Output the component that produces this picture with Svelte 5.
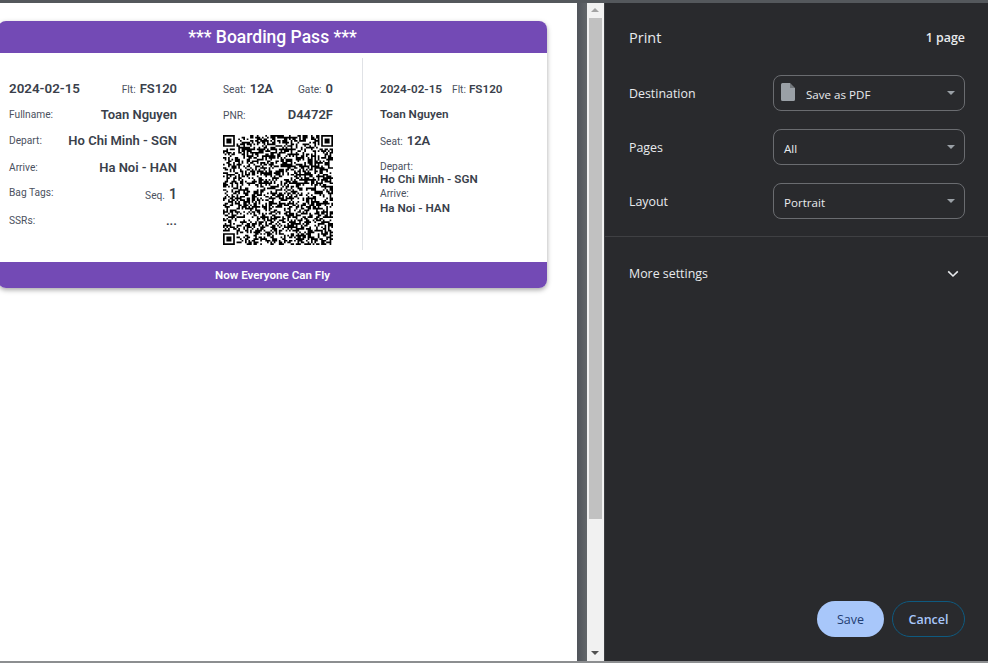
<script>
	// QR modules: three finders, rest is seeded noise
	const size = 65;

	function inFinder(x, y, ox, oy) {
		return x >= ox && x < ox + 7 && y >= oy && y < oy + 7;
	}

	function finderOn(x, y, ox, oy) {
		const dx = x - ox;
		const dy = y - oy;
		if (dx === 0 || dx === 6 || dy === 0 || dy === 6) return true;
		return dx >= 2 && dx <= 4 && dy >= 2 && dy <= 4;
	}

	function buildQr() {
		let seed = 20240215;
		const rand = () => {
			seed = (seed * 1664525 + 1013904223) % 4294967296;
			return seed / 4294967296;
		};
		const finders = [[0, 0], [size - 7, 0], [0, size - 7]];
		let d = '';
		for (let y = 0; y < size; y++) {
			for (let x = 0; x < size; x++) {
				const noise = rand() > 0.5;
				const f = finders.find(([ox, oy]) => inFinder(x, y, ox, oy));
				let on = noise;
				if (f) on = finderOn(x, y, f[0], f[1]);
				else if (finders.some(([ox, oy]) => x >= ox - 1 && x <= ox + 7 && y >= oy - 1 && y <= oy + 7)) on = false;
				if (on) d += `M${x} ${y}h1v1h-1z`;
			}
		}
		return d;
	}

	const qrPath = buildQr();

	const settings = [
		{ label: 'Destination', value: 'Save as PDF', icon: true },
		{ label: 'Pages', value: 'All' },
		{ label: 'Layout', value: 'Portrait' }
	];
</script>

<div class="screen">
	<div class="preview">
		<div class="card">
			<div class="card-head">*** Boarding Pass ***</div>
			<div class="card-body">
				<div class="col-main">
					<div class="row">
						<b class="main-date">2024-02-15</b>
						<span><small>Flt:</small> <b>FS120</b></span>
					</div>
					<div class="row"><small class="lift">Fullname:</small><b>Toan Nguyen</b></div>
					<div class="row"><small class="lift">Depart:</small><b>Ho Chi Minh - SGN</b></div>
					<div class="row"><small class="lift">Arrive:</small><b>Ha Noi - HAN</b></div>
					<div class="row"><small class="lift more-lift">Bag Tags:</small><span><small>Seq.</small> <b class="seq">1</b></span></div>
					<div class="row"><small class="lift">SSRs:</small><b>...</b></div>
				</div>
				<div class="col-qr">
					<div class="row">
						<span><small>Seat:</small> <b>12A</b></span>
						<span><small>Gate:</small> <b>0</b></span>
					</div>
					<div class="row"><small>PNR:</small><b>D4472F</b></div>
					<svg class="qr" viewBox="0 0 65 65" aria-hidden="true"><path d={qrPath} fill="#000" /></svg>
				</div>
				<div class="col-stub">
					<div class="stub-top">
						<b class="date">2024-02-15</b>
						<span class="stub-flt"><small>Flt:</small><b class="small-b">FS120</b></span>
					</div>
					<b class="stub-name">Toan Nguyen</b>
					<div class="stub-seat"><small>Seat:</small> <b>12A</b></div>
					<small class="stub-label first">Depart:</small>
					<b class="stub-val">Ho Chi Minh - SGN</b>
					<small class="stub-label second">Arrive:</small>
					<b class="stub-val last">Ha Noi - HAN</b>
				</div>
			</div>
			<div class="card-foot">Now Everyone Can Fly</div>
		</div>
	</div>

	<div class="edge"></div>

	<div class="scrollbar">
		<span class="arrow up"></span>
		<div class="thumb"></div>
		<span class="arrow down"></span>
	</div>

	<aside class="panel">
		<header class="panel-head">
			<h1>Print</h1>
			<span>1 page</span>
		</header>
		{#each settings as s}
			<div class="setting">
				<span class="setting-label">{s.label}</span>
				<div class="select" class:has-icon={s.icon}>
					{#if s.icon}
						<svg class="doc" viewBox="0 0 14 18" aria-hidden="true">
							<path d="M1.5 0H9l5 5v11.5a1.5 1.5 0 0 1-1.5 1.5h-11A1.5 1.5 0 0 1 0 16.5v-15A1.5 1.5 0 0 1 1.5 0z" fill="#9aa0a6" />
							<path d="M9 0l5 5H9z" fill="#292a2d" opacity="0.35" />
						</svg>
					{/if}
					<span>{s.value}</span>
					<i class="caret"></i>
				</div>
			</div>
		{/each}
		<div class="more">
			<span>More settings</span>
			<svg class="chev" viewBox="0 0 12 8" aria-hidden="true">
				<path d="M1.2 1.4 6 6l4.8-4.6" fill="none" stroke="#e8eaed" stroke-width="1.6" />
			</svg>
		</div>
		<footer class="actions">
			<button class="save">Save</button>
			<button class="cancel">Cancel</button>
		</footer>
	</aside>
</div>

<style>
	:global(body) {
		margin: 0;
		overflow: hidden;
	}

	.screen {
		display: flex;
		width: 988px;
		height: 663px;
		box-sizing: border-box;
		border-top: 3px solid #54585c;
		border-bottom: 2px solid #8c8e90;
		background: #fff;
		overflow: hidden;
	}

	.preview {
		width: 577px;
		flex-shrink: 0;
		padding-top: 18px;
		box-sizing: border-box;
		background: #fff;
		font-family: Roboto, sans-serif;
		color: #3a3f4b;
	}

	.card {
		width: 549px;
		margin-left: -2px;
		border-radius: 8px;
		background: #fff;
		box-shadow: 0 2px 5px rgba(0, 0, 0, 0.35);
		overflow: hidden;
	}

	.card-head {
		height: 32px;
		line-height: 32px;
		background: #734ab5;
		color: #fff;
		text-align: center;
		font-size: 17.5px;
		font-weight: 500;
	}

	.card-body {
		display: flex;
		height: 209px;
		padding: 5px 0 12px;
		box-sizing: border-box;
	}

	b {
		font-weight: 600;
		font-size: 13px;
	}

	small {
		font-size: 10.2px;
		font-weight: 400;
		color: #4b5160;
	}

	.main-date {
		font-size: 13.4px;
	}

	.seq {
		font-size: 14px;
	}

	.row {
		display: flex;
		justify-content: space-between;
		align-items: baseline;
		height: 26.6px;
		line-height: 26.6px;
	}

	.lift {
		align-self: flex-start;
		line-height: 26px;
	}

	.more-lift {
		line-height: 24px;
	}

	.col-main {
		width: 168px;
		margin-left: 11px;
		padding-top: 17px;
	}

	.col-qr {
		width: 110px;
		margin-left: 46px;
		padding-top: 17px;
	}

	.qr {
		display: block;
		width: 110px;
		height: 110px;
		margin-top: 7px;
	}

	.col-stub {
		display: flex;
		flex-direction: column;
		align-items: flex-start;
		margin-left: 29px;
		padding-left: 17px;
		border-left: 1px solid #e0e2e6;
	}

	.stub-top {
		display: flex;
		gap: 10px;
		align-items: baseline;
		height: 26px;
		line-height: 26px;
		margin-top: 18px;
	}

	.stub-flt {
		display: flex;
		gap: 3px;
		align-items: baseline;
	}

	.stub-top .date,
	.small-b {
		font-size: 11.7px;
	}

	.stub-name {
		font-size: 11.7px;
		line-height: 16px;
		margin-top: 4px;
	}

	.stub-seat {
		line-height: 18px;
		margin-top: 9px;
	}

	.stub-label {
		line-height: 13px;
	}

	.stub-label.first {
		margin-top: 9px;
	}

	.stub-label.second {
		margin-top: 1px;
	}

	.stub-val {
		font-size: 11.7px;
		line-height: 13px;
	}

	.stub-val.last {
		margin-top: 2px;
	}

	.card-foot {
		height: 26px;
		line-height: 26px;
		background: #734ab5;
		color: #fff;
		text-align: center;
		font-size: 11.6px;
		font-weight: 600;
	}

	.edge {
		width: 10px;
		flex-shrink: 0;
		background: linear-gradient(90deg, #50545a, #62666a);
	}

	.scrollbar {
		position: relative;
		width: 18px;
		flex-shrink: 0;
		background: #f1f1f1;
		border-right: 1px solid #3c3e42;
		padding: 15px 2px 0 2px;
		box-sizing: border-box;
	}

	.thumb {
		height: 501px;
		background: #c1c1c1;
	}

	.arrow {
		position: absolute;
		left: 4px;
		width: 0;
		height: 0;
		border-left: 4px solid transparent;
		border-right: 4px solid transparent;
	}

	.arrow.up {
		top: 5px;
		border-bottom: 4px solid #a3a3a3;
	}

	.arrow.down {
		bottom: 6px;
		border-top: 4px solid #505050;
	}

	.panel {
		display: flex;
		flex-direction: column;
		width: 383px;
		flex-shrink: 0;
		background: #292a2d;
		color: #e8eaed;
		font-family: "Open Sans", sans-serif;
		font-size: 12.4px;
	}

	.panel-head {
		display: flex;
		justify-content: space-between;
		align-items: center;
		height: 34px;
		margin-top: 17px;
		padding: 0 23px 0 24px;
		margin-bottom: 21px;
	}

	h1 {
		margin: 0;
		font-size: 14.5px;
		font-weight: 400;
	}

	.panel-head span {
		font-weight: 600;
		font-size: 12.4px;
	}

	.setting {
		display: flex;
		justify-content: space-between;
		align-items: center;
		height: 36px;
		margin-bottom: 18px;
		padding: 0 23px 0 24px;
	}

	.select {
		position: relative;
		display: flex;
		align-items: center;
		width: 192px;
		height: 36px;
		box-sizing: border-box;
		padding: 2px 10px 0;
		border: 1px solid #6a6c70;
		border-radius: 8px;
		font-size: 11.6px;
	}

	.select.has-icon {
		padding-left: 7px;
		gap: 11px;
	}

	.doc {
		width: 14px;
		height: 18px;
		margin-top: -4px;
	}

	.caret {
		position: absolute;
		right: 9px;
		top: 15px;
		border-left: 4px solid transparent;
		border-right: 4px solid transparent;
		border-top: 4px solid #9aa0a6;
	}

	.more {
		display: flex;
		justify-content: space-between;
		align-items: center;
		height: 74px;
		box-sizing: border-box;
		border-top: 1px solid #3f4043;
		padding: 0 29px 0 24px;
		margin-top: -1px;
	}

	.chev {
		width: 12px;
		height: 8px;
	}

	.actions {
		display: flex;
		justify-content: flex-end;
		gap: 8px;
		margin-top: auto;
		padding: 0 23px 24px 0;
	}

	button {
		height: 36px;
		border-radius: 18px;
		font-family: "Open Sans", sans-serif;
		font-size: 12.5px;
		padding: 0;
	}

	.save {
		width: 67px;
		border: none;
		background: #a8c7fa;
		color: #1f3d72;
	}

	.cancel {
		width: 73px;
		border: 1px solid #0e5a80;
		background: transparent;
		color: #a8c7fa;
		font-weight: 600;
	}
</style>
